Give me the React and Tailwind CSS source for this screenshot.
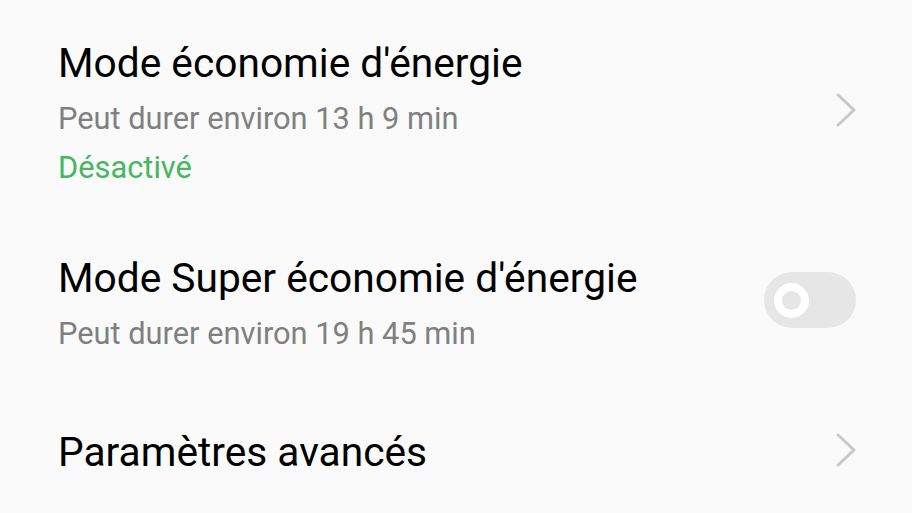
import React from 'react';

const Chevron = () => (
    <svg width="22" height="36" viewBox="0 0 22 36" fill="none">
        <path d="M3 3 L19 18 L3 33" stroke="#c8c8c8" strokeWidth="3" strokeLinecap="round" strokeLinejoin="round" />
    </svg>
);

const Toggle = () => (
    <div className="w-[92px] h-[56px] rounded-full bg-[#e6e6e6] flex items-center pl-[10px]">
        <div className="w-[35px] h-[35px] rounded-full border-[8px] border-white bg-[#e6e6e6]" />
    </div>
);

export default function App() {
    return (
        <div
            className="w-[912px] h-[513px] overflow-hidden bg-[#fafafa] flex flex-col"
            style={{ fontFamily: 'Roboto, "Noto Sans", sans-serif' }}
        >
            {/* Mode économie */}
            <div className="flex items-start justify-between pl-[58px] pr-[55px] pt-[37px]">
                <div className="flex flex-col">
                    <p className="text-[40.7px] leading-[52px] text-black">Mode économie d'énergie</p>
                    <p className="mt-[8px] text-[30.8px] leading-[44px] text-[#808080]">Peut durer environ 13 h 9 min</p>
                    <p className="mt-[5px] text-[30.8px] leading-[44px] text-[#45b75e]">Désactivé</p>
                </div>
                <div className="mt-[55px]">
                    <Chevron />
                </div>
            </div>

            {/* Super économie */}
            <div className="flex items-start justify-between pl-[58px] pr-[56px] pt-[62px]">
                <div className="flex flex-col">
                    <p className="text-[40.7px] leading-[52px] text-black">Mode Super économie d'énergie</p>
                    <p className="mt-[8px] text-[30.8px] leading-[44px] text-[#808080]">Peut durer environ 19 h 45 min</p>
                </div>
                <div className="mt-[20px]">
                    <Toggle />
                </div>
            </div>

            {/* Paramètres avancés */}
            <div className="flex items-start justify-between pl-[58px] pr-[55px] pt-[70px]">
                <p className="text-[40.7px] leading-[52px] text-black">Paramètres avancés</p>
                <div className="mt-[6px]">
                    <Chevron />
                </div>
            </div>
        </div>
    );
}
